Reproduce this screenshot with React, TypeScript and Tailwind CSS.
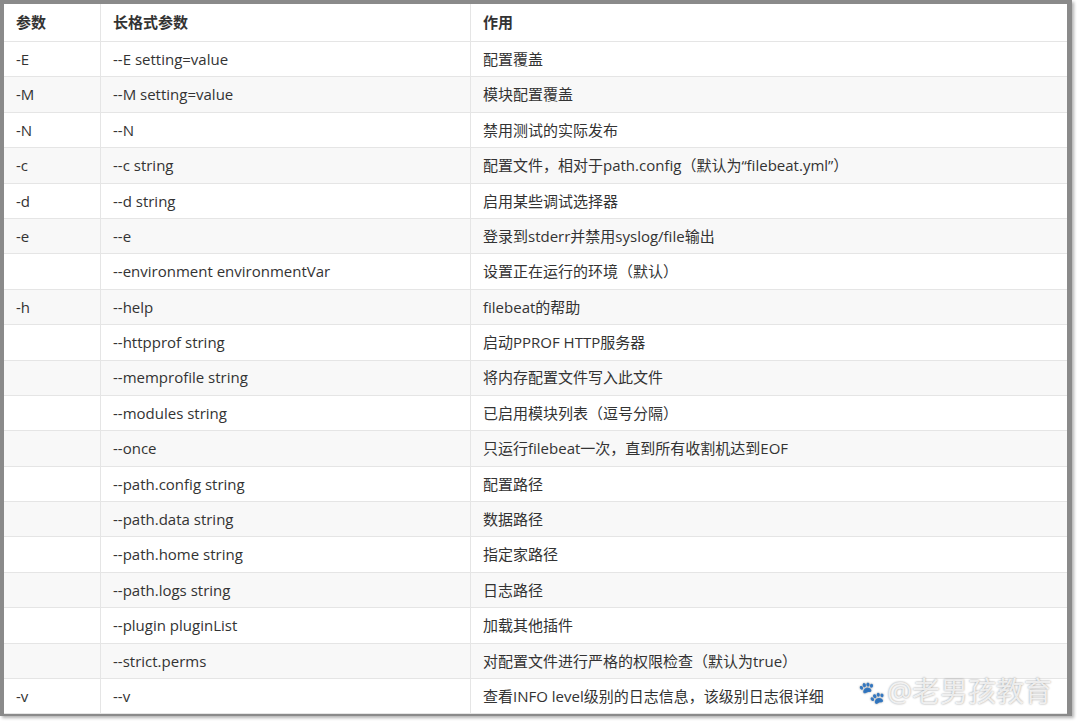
const rows: [string, string, string][] = [
  ["-E", "--E setting=value", "配置覆盖"],
  ["-M", "--M setting=value", "模块配置覆盖"],
  ["-N", "--N", "禁用测试的实际发布"],
  ["-c", "--c string", "配置文件，相对于path.config（默认为“filebeat.yml”）"],
  ["-d", "--d string", "启用某些调试选择器"],
  ["-e", "--e", "登录到stderr并禁用syslog/file输出"],
  ["", "--environment environmentVar", "设置正在运行的环境（默认）"],
  ["-h", "--help", "filebeat的帮助"],
  ["", "--httpprof string", "启动PPROF HTTP服务器"],
  ["", "--memprofile string", "将内存配置文件写入此文件"],
  ["", "--modules string", "已启用模块列表（逗号分隔）"],
  ["", "--once", "只运行filebeat一次，直到所有收割机达到EOF"],
  ["", "--path.config string", "配置路径"],
  ["", "--path.data string", "数据路径"],
  ["", "--path.home string", "指定家路径"],
  ["", "--path.logs string", "日志路径"],
  ["", "--plugin pluginList", "加载其他插件"],
  ["", "--strict.perms", "对配置文件进行严格的权限检查（默认为true）"],
  ["-v", "--v", "查看INFO level级别的日志信息，该级别日志很详细"],
];

export default function App() {
  return (
    <div
      className="w-[1080px] h-[726px] bg-white relative overflow-hidden text-[15px] text-[#333]"
      style={{ fontFamily: '"Open Sans", "Noto Sans CJK SC", sans-serif' }}
    >
      <div className="w-[1072px] h-[716px] bg-[#8a8a8a] pt-[4px] pl-[4px] pr-[5px] pb-[5px] shadow-[2px_2px_3px_rgba(0,0,0,0.3)]">
        <div className="bg-white h-full">
          <div className="grid grid-cols-[96px_370px_1fr] h-[38px] border-b border-[#e5e5e5] font-bold items-center">
            <div className="pl-[12px]">参数</div>
            <div className="pl-[12px] border-l border-[#e5e5e5] h-full flex items-center">长格式参数</div>
            <div className="pl-[12px] border-l border-[#e5e5e5] h-full flex items-center">作用</div>
          </div>
          {rows.map((r, i) => (
            <div
              key={i}
              className={`grid grid-cols-[96px_370px_1fr] h-[35.4px] border-b border-[#e5e5e5] ${i % 2 === 1 ? "bg-[#f8f8f8]" : "bg-white"}`}
            >
              <div className="pl-[12px] flex items-center">{r[0]}</div>
              <div className="pl-[12px] border-l border-[#e5e5e5] flex items-center">{r[1]}</div>
              <div className="pl-[12px] border-l border-[#e5e5e5] flex items-center">{r[2]}</div>
            </div>
          ))}
        </div>
      </div>
      <div className="absolute left-[858px] top-[670px] flex items-center gap-[2px] text-[28px] text-white/80 [text-shadow:0_0_2px_rgba(0,0,0,0.45)]">
        <span className="text-[22px]">🐾</span>
        <span>@老男孩教育</span>
      </div>
    </div>
  );
}
